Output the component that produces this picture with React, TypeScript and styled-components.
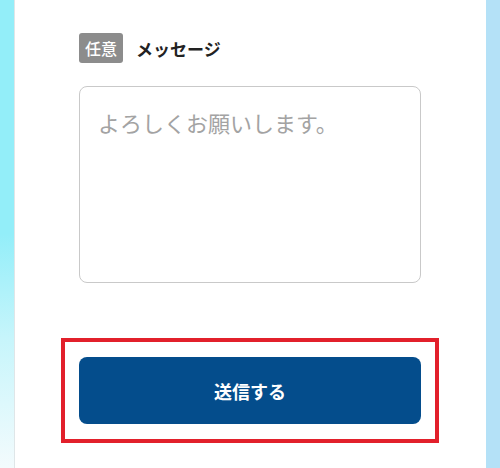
import React from "react";
import styled, { createGlobalStyle } from "styled-components";

const GlobalStyle = createGlobalStyle`
  html, body {
    margin: 0;
    padding: 0;
    height: 468px;
    overflow: hidden;
    font-family: "Noto Sans CJK JP", "Noto Sans", sans-serif;
  }
  * { box-sizing: border-box; }
`;

const Page = styled.div`
  display: grid;
  grid-template-columns: 14px 1fr 14px;
  height: 468px;
  width: 500px;
`;

const LeftStrip = styled.div`
  background: linear-gradient(
    to bottom,
    #93eef9 0%,
    #93eef9 50%,
    #c6f5fb 72%,
    #f3fbfd 100%
  );
`;

const RightStrip = styled.div`
  background: #b4e1f7;
`;

const Panel = styled.main`
  background: #ffffff;
  box-shadow: -1px 0 0 #dfe6e8, 1px 0 0 #a9d3e8;
  margin-left: 1px;
  padding: 33px 65px 0 64px;
  display: flex;
  flex-direction: column;
`;

const LabelRow = styled.div`
  display: flex;
  align-items: center;
  gap: 13px;
  height: 30px;
`;

const Badge = styled.span`
  display: inline-flex;
  align-items: center;
  justify-content: center;
  height: 30px;
  padding: 0 6px;
  border-radius: 3px;
  background: #8c8c8c;
  color: #ffffff;
  font-size: 16px;
  font-weight: 500;
  line-height: 1;
`;

const LabelText = styled.span`
  font-size: 17px;
  font-weight: 700;
  color: #222222;
  line-height: 1;
`;

const MessageArea = styled.textarea`
  margin-top: 23px;
  width: 100%;
  height: 197px;
  border: 1.5px solid #c9c9c9;
  border-radius: 8px;
  padding: 20px 18px;
  resize: none;
  font-family: "Noto Sans CJK JP", "Noto Sans", sans-serif;
  font-size: 22px;
  line-height: 1.4;
  color: #333333;
  outline: none;
  &::placeholder {
    color: #a3a3a3;
  }
`;

const Highlight = styled.div`
  margin: 55px -18px 0 -18px;
  border: 4px solid #e2202b;
  padding: 15px 14px;
`;

const SubmitButton = styled.button`
  display: flex;
  align-items: center;
  justify-content: center;
  width: 100%;
  height: 67px;
  border: none;
  border-radius: 8px;
  background: #044d8c;
  color: #ffffff;
  font-family: "Noto Sans CJK JP", "Noto Sans", sans-serif;
  font-size: 18px;
  font-weight: 700;
  cursor: pointer;
`;

export default function App() {
  return (
    <>
      <GlobalStyle />
      <Page>
        <LeftStrip />
        <Panel>
          <LabelRow>
            <Badge>任意</Badge>
            <LabelText>メッセージ</LabelText>
          </LabelRow>
          <MessageArea placeholder="よろしくお願いします。" />
          <Highlight>
            <SubmitButton type="button">送信する</SubmitButton>
          </Highlight>
        </Panel>
        <RightStrip />
      </Page>
    </>
  );
}
